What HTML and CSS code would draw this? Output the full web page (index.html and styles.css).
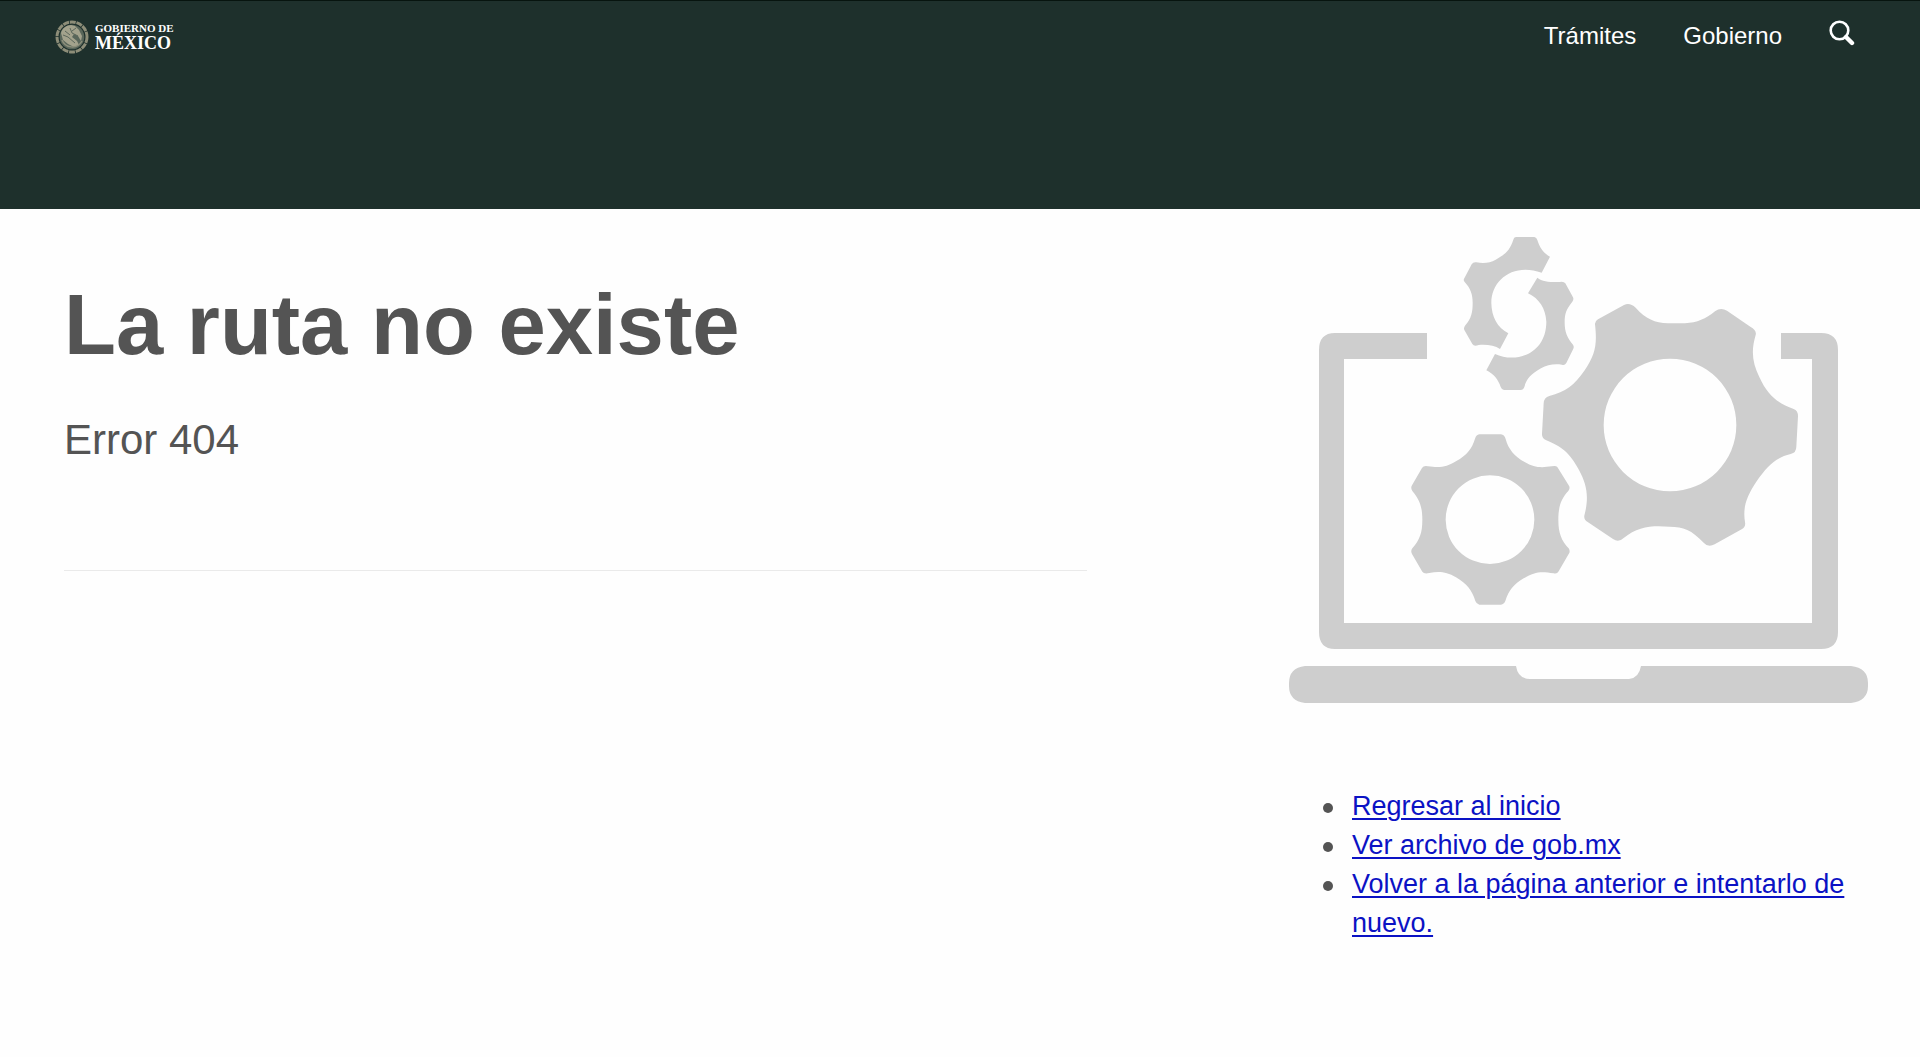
FILE: index.html
```html
<!DOCTYPE html>
<html lang="es">
<head>
<meta charset="utf-8">
<meta name="viewport" content="width=device-width, initial-scale=1">
<title>La ruta no existe</title>
<link rel="stylesheet" href="styles.css">
</head>
<body>
<header class="site-header">
  <a class="brand" href="#" aria-label="Gobierno de México">
    <svg class="seal" viewBox="0 0 34 34" aria-hidden="true">
      <circle cx="17" cy="17" r="15" fill="none" stroke="#8d8d78" stroke-width="3" stroke-dasharray="6 .8"/>
      <circle cx="17" cy="17" r="12.300" fill="#59665a"/>
      <path d="M6 13c1-5 6-8 10-8l4 1 4 4 3 6-1 5-3-5-4-2-2 3 5 4 2 4-5 2-6-3-5-4z" fill="#a3a28c"/>
      <path d="M8 15l5 2 7 6M15 8l2 5 6 3M21 8l-4 3M10 11l5 4" fill="none" stroke="#5c675b" stroke-width="1"/>
      <path d="M7 20c3 8 15 10 20 1" fill="none" stroke="#8d8f7b" stroke-width="1.500"/>
    </svg>
    <span class="brand-name"><span class="brand-top">GOBIERNO DE</span><span class="brand-main">MÉXICO</span></span>
  </a>
  <nav class="site-nav">
    <a href="#">Trámites</a>
    <a href="#">Gobierno</a>
    <button class="search" type="button" aria-label="Buscar">
      <svg viewBox="0 0 26 26" aria-hidden="true" fill="none" stroke="#fff">
        <circle cx="10.500" cy="10.500" r="8.800" stroke-width="2.600"/>
        <path d="M17 17l6 6" stroke-width="4.400" stroke-linecap="round"/>
      </svg>
    </button>
  </nav>
</header>
<main class="content">
  <section class="message">
    <h1>La ruta no existe</h1>
    <p>Error 404</p>
    <hr>
  </section>
  <aside class="help">
    <svg class="artwork" viewBox="0 0 579 466" fill="#cecece" aria-hidden="true">
      <path d="M138 96H46Q30 96 30 113V395Q30 412 46 412H532Q549 412 549 395V113Q549 96 532 96H492V122H523V386H55V122H138Z"/>
      <path d="M16 429H227Q229 442 241 442H340Q350 441 352 429H562Q579 431 579 446V449Q579 464 562 466H16Q0 464 0 449V446Q0 431 16 429Z"/>
      <g transform="translate(151 -17) scale(.33333)">
        <path d="M228 51H283Q290 52 292 60C299 83 310 99 330 110L305 158C220 127 153 180 154 250C155 290 171 322 205 340L180 387C164 376 140 373 116 375Q102 380 97 372L73 330Q70 324 76 316C94 295 98 277 98 248C98 224 92 205 74 186Q69 180 73 175L95 133Q100 125 109 127C134 131 150 128 167 119C196 103 210 90 220 59Q221 52 228 51Z"/>
        <path d="M292 173C307 185 333 187 359 186Q371 183 376 190L399 232Q402 238 397 245C379 268 374 279 374 308C374 336 382 354 399 374Q403 380 400 386L379 429Q374 437 366 434C342 431 322 434 303 445C275 461 260 475 253 501Q250 510 242 510H192Q185 509 182 501C175 480 162 462 139 451L165 402C230 432 319 400 319 305C317 266 298 236 264 220Z"/>
      </g>
      <g transform="translate(231 53) scale(.33333)">
        <path fill-rule="evenodd" d="M234 88L312 45Q329 36 347 53C378 87 404 98 444 100H495C532 98 557 87 585 64Q602 51 621 62L691 110Q711 121 707 135C692 185 698 221 718 261C744 318 773 339 821 357Q834 361 834 379L829 470Q829 488 812 492C767 503 741 528 710 574C679 620 668 653 675 696Q678 711 665 718L584 763Q565 774 551 758C515 720 490 710 449 710C398 706 354 708 311 744Q296 759 279 747L203 696Q189 687 194 673C208 617 199 581 177 540C149 488 126 471 79 451Q65 446 66 431L71 340Q72 322 88 318C137 306 163 286 194 241C226 194 232 163 225 103Q224 94 234 88ZM649 405A199 199 0 1 0 251 405A199 199 0 1 0 649 405Z"/>
      </g>
      <g transform="translate(101 183) scale(.33333)">
        <path fill-rule="evenodd" d="M268 43H333Q343 44 347 57C354 86 374 110 404 126C433 144 455 143 485 139Q498 136 502 141L536 196Q542 204 535 213C513 236 505 261 505 299C505 338 514 362 536 385Q542 394 536 402L506 454Q501 463 491 460C451 453 433 456 401 475C371 493 357 510 346 543Q342 553 333 554H268Q259 552 256 543C246 511 231 492 198 472C168 454 146 454 118 459Q102 463 97 455L66 402Q61 393 67 385C89 359 97 339 97 299C97 259 88 238 67 213Q61 204 66 196L96 144Q101 136 114 139C151 144 170 141 199 123C230 106 246 86 255 56Q259 44 268 43ZM433 299A133 133 0 1 0 167 299A133 133 0 1 0 433 299Z"/>
      </g>
    </svg>
    <ul>
      <li><a href="#">Regresar al inicio</a></li>
      <li><a href="#">Ver archivo de gob.mx</a></li>
      <li><a href="#">Volver a la página anterior e intentarlo de nuevo.</a></li>
    </ul>
  </aside>
</main>
</body>
</html>
```
FILE: styles.css
```css
* { box-sizing: border-box; }

body {
  margin: 0;
  background: #fefefe;
  color: #545454;
  font-family: "Liberation Sans", Arial, sans-serif;
}

.site-header {
  display: flex;
  justify-content: space-between;
  align-items: flex-start;
  min-height: 209px;
  padding: 19px 65px 0 55px;
  border-top: 1px solid #07140f;
  background: #1e302c;
}

.brand {
  display: flex;
  align-items: center;
  gap: 6px;
  color: #fff;
  text-decoration: none;
  font-family: "Liberation Serif", "Times New Roman", serif;
  font-weight: 700;
}

.seal { width: 34px; height: 34px; }
.brand-name { display: flex; flex-direction: column; }
.brand-top { font-size: 11px; line-height: 12px; }
.brand-main { font-size: 18px; line-height: 18px; }

.site-nav { display: flex; gap: 47px; }

.site-nav a {
  color: #fff;
  font-size: 24px;
  line-height: 32px;
  text-decoration: none;
}

.search {
  width: 26px;
  height: 26px;
  padding: 0;
  border: 0;
  background: none;
}

.search svg { display: block; width: 26px; height: 26px; }

.content {
  display: grid;
  grid-template-columns: 1023fr 579fr;
  column-gap: 202px;
  padding: 28px 52px 80px 64px;
}

h1 {
  margin: 42px 0 0;
  font-size: 85px;
  line-height: 92px;
}

.message p {
  margin: 45px 0 0;
  font-size: 42px;
  line-height: 48px;
}

hr {
  margin: 106px 0 0;
  border: 0;
  border-top: 1px solid #eaeaea;
}

.artwork { display: block; width: 100%; }

.help ul {
  margin: 84px 0 0;
  padding-left: 34px;
  list-style: none;
  font-size: 27px;
  line-height: 39px;
}

.help li { display: flex; gap: 19px; }

.help li::before {
  content: "";
  flex: none;
  width: 10px;
  height: 10px;
  margin-top: 16px;
  border-radius: 50%;
  background: #545454;
}

.help a { color: #0b12c4; text-underline-offset: 3px; text-decoration-thickness: 2px; }
```
